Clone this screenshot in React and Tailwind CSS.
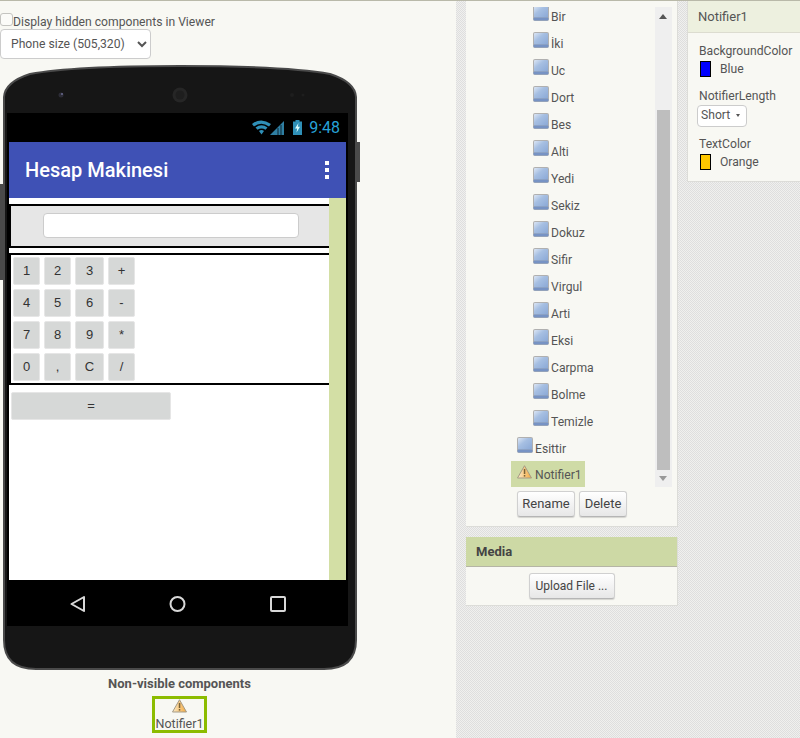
import React from "react";

const dots = "bg-[repeating-conic-gradient(#dedede_0%_25%,#f0f0ee_0%_50%)] bg-[length:2px_2px]";

function BlockIcon() {
  return (
    <svg width="16" height="16" viewBox="0 0 16 16" className="shrink-0">
      <defs>
        <linearGradient id="bi" x1="0" y1="0" x2="1" y2="1">
          <stop offset="0" stopColor="#dce6f4" />
          <stop offset="0.4" stopColor="#a6bfe2" />
          <stop offset="1" stopColor="#8aa8d6" />
        </linearGradient>
      </defs>
      <rect x="0" y="0" width="16" height="16" rx="2" fill="#b0b0b0" />
      <rect x="1" y="1" width="14" height="11.5" rx="1" fill="url(#bi)" />
      <rect x="0.5" y="12.5" width="15" height="3" rx="1" fill="#7793c4" />
    </svg>
  );
}

function WarnIcon() {
  return (
    <svg width="15" height="14" viewBox="0 0 15 14" className="shrink-0">
      <defs>
        <linearGradient id="wi" x1="0" y1="0" x2="1" y2="0">
          <stop offset="0" stopColor="#fcebc8" />
          <stop offset="1" stopColor="#f3a93f" />
        </linearGradient>
      </defs>
      <path d="M7.5 0.7 L14.5 13 L0.5 13 Z" fill="url(#wi)" stroke="#a49a86" strokeWidth="1" strokeLinejoin="round" />
      <rect x="6.8" y="4" width="1.5" height="5" fill="#7a6236" />
      <rect x="6.8" y="10" width="1.5" height="1.6" fill="#7a6236" />
    </svg>
  );
}

function CalcBtn({ w, children }) {
  return (
    <div className={`${w} h-[28px] rounded-[2px] bg-[#d6d8d7] border border-[#e6e6e6] flex items-center justify-center text-[13px] text-[#333] pb-[1px] [font-family:'Liberation_Sans',sans-serif]`}>
      {children}
    </div>
  );
}

function GwtBtn({ className = "", children }) {
  return (
    <div className={`h-[26px] rounded-[3px] border border-[#d0d0d0] border-b-[#b5b5b5] bg-gradient-to-b from-white to-[#e7e7e7] shadow-[0_1px_1px_rgba(0,0,0,0.15)] flex items-center justify-center text-[#444] ${className}`}>
      {children}
    </div>
  );
}

const children = ["Bir", "İki", "Uc", "Dort", "Bes", "Alti", "Yedi", "Sekiz", "Dokuz", "Sifir", "Virgul", "Arti", "Eksi", "Carpma", "Bolme", "Temizle"];
const rows = [["1", "2", "3", "+"], ["4", "5", "6", "-"], ["7", "8", "9", "*"], ["0", ",", "C", "/"]];

function Phone() {
  return (
    <div className="relative ml-[3px] mt-[6px] w-[354px] h-[605px]">
      <div className="absolute -left-[3px] top-[119px] w-[4px] h-[96px] bg-[#4a4a4a]" />
      <div className="absolute -right-[3px] top-[77px] w-[4px] h-[40px] bg-[#4a4a4a]" />
      <svg className="absolute inset-0" width="354" height="605" viewBox="0 0 354 605">
        <path d="M1 32 Q2 17 27 9 Q70 1 177 1 Q284 1 327 9 Q352 17 353 32 L353 575 Q353 604 321 604 L33 604 Q1 604 1 575 Z" fill="#161616" stroke="#4a4a4a" strokeWidth="2" />
        <circle cx="58" cy="30" r="2.5" fill="#2c2c36" />
        <circle cx="59" cy="29" r="1" fill="#6a6a90" />
        <circle cx="177" cy="30" r="7.5" fill="#262626" />
        <circle cx="177" cy="30" r="4.5" fill="#1e1e1e" />
        <circle cx="289" cy="30" r="2" fill="#1e1e1e" />
        <circle cx="300" cy="30" r="1.5" fill="#1e1e1e" />
      </svg>
      <div className="absolute left-[4px] top-[48px] w-[341px] h-[513px] bg-black flex flex-col">
        <div className="h-[29px] flex items-center justify-end shrink-0">
          <svg width="34" height="16" viewBox="0 0 34 16" className="mr-[6px]">
            <path d="M0 4 Q9 -3 19 4 L17 6.5 Q9 1 2 6.5 Z M3.5 7.5 Q9.5 3 15.5 7.5 L13.5 9.8 Q9.5 7 5.5 9.8 Z M7 11 Q9.5 9.2 12 11 L9.5 14.5 Z" fill="#2f90b8" />
            <path d="M18 15 L32 1 L32 15 Z" fill="#2f7fa3" />
            <path d="M26 15 V8 M29 15 V5" stroke="#000" strokeWidth="0.7" />
          </svg>
          <svg width="11" height="15" viewBox="0 0 11 15" className="mr-[6px]">
            <path d="M3.5 0 H7.5 V1.5 H10 V15 H1 V1.5 H3.5 Z" fill="#2f90b8" />
            <path d="M6.5 3 L3 8.5 H5.2 L4.5 12.5 L8 6.8 H5.8 Z" fill="#dff" />
          </svg>
          <span className="mr-[8px] text-[16px] leading-none text-[#27a3d8]">9:48</span>
        </div>
        <div className="mx-[2px] h-[56px] bg-[#3f51b5] shrink-0 flex items-center justify-between pl-[16px] pr-[17px]">
          <span className="text-[20px] font-medium text-white">Hesap Makinesi</span>
          <div className="flex flex-col gap-[3px]">
            <div className="w-[4px] h-[4px] bg-white" />
            <div className="w-[4px] h-[4px] bg-white" />
            <div className="w-[4px] h-[4px] bg-white" />
          </div>
        </div>
        <div className="mx-[2px] h-[382px] bg-white shrink-0 flex">
          <div className="w-[320px] pt-[6px]">
            <div className="h-[44px] bg-[#e6e6e6] border-y-2 border-l-2 border-black flex items-center justify-center pb-[1px] pl-[2px]">
              <div className="w-[256px] h-[25px] bg-white border border-[#cccccc] rounded-[4px]" />
            </div>
            <div className="mt-[5px] h-[132px] border-y-2 border-l-2 border-black pl-[2px] pt-[2px] flex flex-col gap-[4px]">
              {rows.map((r) => (
                <div key={r[0]} className="flex">
                  <CalcBtn w="w-[27px]">{r[0]}</CalcBtn>
                  <div className="ml-[4px]"><CalcBtn w="w-[27px]">{r[1]}</CalcBtn></div>
                  <div className="ml-[4px]"><CalcBtn w="w-[29px]">{r[2]}</CalcBtn></div>
                  <div className="ml-[4px]"><CalcBtn w="w-[27px]">{r[3]}</CalcBtn></div>
                </div>
              ))}
            </div>
            <div className="mt-[7px] ml-[2px]">
              <CalcBtn w="w-[160px]">=</CalcBtn>
            </div>
          </div>
          <div className="w-[17px] bg-[#d3dfa5]" />
        </div>
        <div className="flex-1 flex items-center">
          <svg width="341" height="46" viewBox="0 0 341 46">
            <path d="M77 17 L64.5 24 L77 31 Z" fill="none" stroke="#d8d8d8" strokeWidth="2" strokeLinejoin="round" />
            <circle cx="170.5" cy="24" r="7" fill="none" stroke="#d8d8d8" strokeWidth="2" />
            <rect x="264" y="17" width="14" height="14" rx="1" fill="none" stroke="#d8d8d8" strokeWidth="2" />
          </svg>
        </div>
      </div>
    </div>
  );
}

export default function App() {
  return (
    <div className={`w-[800px] h-[738px] overflow-hidden flex border-t border-[#b9b9a9] text-[12.15px] text-[#555] [font-family:Roboto,sans-serif] ${dots}`}>
      <div className="w-[456px] h-full bg-[#f8f8f3] shrink-0 pt-[12px]">
        <label className="flex items-start h-[16px] leading-[18px]">
          <input type="checkbox" className="appearance-none m-0 w-[13px] h-[13px] shrink-0 border border-[#c4c4c0] rounded-[3px] bg-[#fbfbf8]" />
          <span>Display hidden components in Viewer</span>
        </label>
        <select className="block w-[151px] h-[30px] rounded-[4px] border border-[#cccccc] bg-white text-[12.15px] text-[#555] pl-[6px]">
          <option>Phone size (505,320)</option>
        </select>
        <Phone />
        <div className="w-[359px] flex flex-col items-center mt-[6px]">
          <div className="text-[13px] font-bold leading-[16px]">Non-visible components</div>
          <div className="mt-[4px] w-[55px] h-[37px] border-[3px] border-[#8cbc00] flex flex-col items-center">
            <WarnIcon />
            <span className="mt-[3px] text-[12.5px] leading-[15px]">Notifier1</span>
          </div>
        </div>
      </div>

      <div className="w-[10px] shrink-0" />

      <div className="w-[212px] shrink-0">
        <div className="h-[526px] bg-[#f8f8f3] border-r border-b border-[#dcdcd8] pt-[6px] relative">
          <div className="h-[480px] flex">
            <div className="w-[189px] h-[480px] overflow-hidden">
              <div className="-mt-[4px]">
                {children.map((c) => (
                  <div key={c} className="h-[27px] flex items-start pl-[67px] pt-[2px]">
                    <BlockIcon />
                    <span className="ml-[2px] leading-[24px]">{c}</span>
                  </div>
                ))}
                <div className="h-[27px] flex items-start pl-[51px] pt-[2px]">
                  <BlockIcon />
                  <span className="ml-[2px] leading-[24px]">Esittir</span>
                </div>
                <div className="-mt-px ml-[45px] w-[74px] h-[26px] bg-[#cfdba6] flex items-start pl-[6px] pt-[4px]">
                  <WarnIcon />
                  <span className="ml-[3px] leading-[21px]">Notifier1</span>
                </div>
              </div>
            </div>
            <div className="w-[17px] h-[480px] bg-[#efefef] px-[2px] relative">
              <div className="h-[103px]" />
              <div className="h-[360px] bg-[#bebebe]" />
              <div className="absolute left-[4px] top-[7px] w-0 h-0 border-x-[4px] border-x-transparent border-b-[5px] border-b-[#555]" />
              <div className="absolute left-[4px] top-[469px] w-0 h-0 border-x-[4px] border-x-transparent border-t-[5px] border-t-[#999]" />
            </div>
          </div>
          <div className="flex mt-[4px] ml-[51px] gap-[4px] text-[13px]">
            <GwtBtn className="w-[58px]">Rename</GwtBtn>
            <GwtBtn className="w-[48px]">Delete</GwtBtn>
          </div>
        </div>
        <div className="h-[10px]" />
        <div className="h-[69px] bg-[#f8f8f3] border-r border-b border-[#dcdcd8]">
          <div className="h-[30px] bg-[#cdd9a5] border-b border-[#b5b5a5] flex items-center pl-[10px] text-[13px] font-bold text-[#444]">Media</div>
          <div className="flex justify-center pt-[6px]">
            <GwtBtn className="w-[86px] text-[12px]">Upload File ...</GwtBtn>
          </div>
        </div>
      </div>

      <div className="w-[9px] shrink-0" />

      <div className="w-[113px] shrink-0 h-[181px] bg-[#f8f8f3] border-b border-l border-[#dcdcd8]">
        <div className="h-[32px] bg-[#edf0df] border-b border-[#dcdcd0] flex items-center pl-[10px] text-[13px]">Notifier1</div>
        <div className="pl-[11px] pt-[10px]">
          <div className="leading-[16px]">BackgroundColor</div>
          <div className="flex items-center h-[17px] mt-[1px]">
            <div className="ml-[1px] w-[11px] h-[16px] bg-[#0000ff] border border-black" />
            <span className="ml-[9px] pt-[2px]">Blue</span>
          </div>
          <div className="leading-[16px] mt-[11px]">NotifierLength</div>
          <div className="-ml-[2px] mt-[1px] w-[50px] h-[22px] bg-white border border-[#cccccc] rounded-[4px] flex items-center pl-[3px] pb-[1px]">
            <span>Short</span>
            <div className="ml-[6px] w-0 h-0 border-x-[2.5px] border-x-transparent border-t-[3px] border-t-[#555]" />
          </div>
          <div className="leading-[16px] mt-[9px]">TextColor</div>
          <div className="flex items-center h-[17px] mt-[1px]">
            <div className="ml-[1px] w-[11px] h-[16px] bg-[#ffc800] border border-black" />
            <span className="ml-[9px] pt-[2px]">Orange</span>
          </div>
        </div>
      </div>
    </div>
  );
}
